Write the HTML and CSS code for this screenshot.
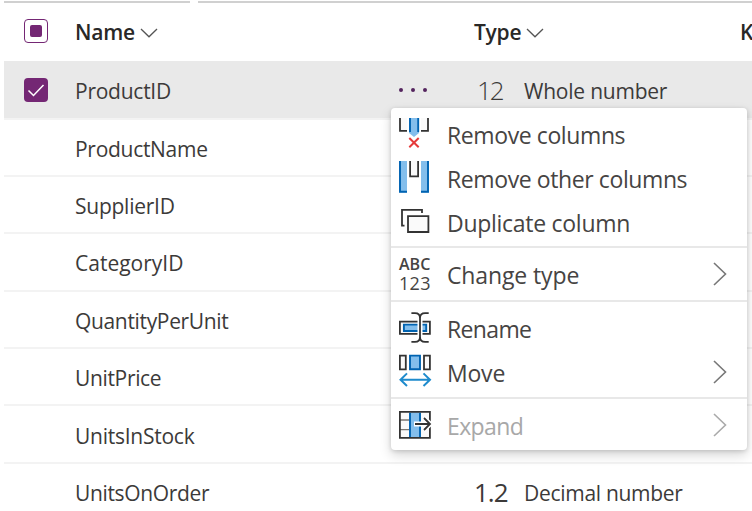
FILE: index.html
```html
<!DOCTYPE html>
<html lang="en">
<head>
<meta charset="utf-8">
<title>Columns</title>
<link rel="stylesheet" href="styles.css">
</head>
<body>
<main class="panel">
  <div class="tabs"><i class="tab tab-first"></i><i class="tab tab-rest"></i></div>
  <div class="row head">
    <span class="check"><i class="box mixed"></i></span>
    <span class="name"><b class="t-name">Name</b><svg class="down" viewBox="0 0 18 10"><path d="M1 1l8 7.8L17 1"/></svg></span>
    <span class="more"></span>
    <span class="kind"><b class="t-type">Type</b><svg class="down" viewBox="0 0 18 10"><path d="M1 1l8 7.8L17 1"/></svg></span>
    <b class="key">K</b>
  </div>
  <div class="row selected">
    <span class="check"><i class="box checked"><svg viewBox="0 0 24 24"><path d="M4.5 12.5l5 5L19.5 7"/></svg></i></span>
    <span class="name"><span class="n1">ProductID</span></span>
    <span class="more"><i></i><i></i><i></i></span>
    <span class="kind"><span class="num light">12</span><span class="whole">Whole number</span></span>
  </div>
  <div class="row"><span class="check"></span><span class="name"><span class="n2">ProductName</span></span></div>
  <div class="row"><span class="check"></span><span class="name"><span class="n3">SupplierID</span></span></div>
  <div class="row"><span class="check"></span><span class="name"><span class="n4">CategoryID</span></span></div>
  <div class="row"><span class="check"></span><span class="name"><span class="n5">QuantityPerUnit</span></span></div>
  <div class="row"><span class="check"></span><span class="name"><span class="n6">UnitPrice</span></span></div>
  <div class="row"><span class="check"></span><span class="name"><span class="n7">UnitsInStock</span></span></div>
  <div class="row last"><span class="check"></span><span class="name"><span class="n8">UnitsOnOrder</span></span><span class="more"></span>
    <span class="kind"><span class="num">1.2</span><span class="decimal">Decimal number</span></span></div>
</main>

<div class="menu">
  <div class="group g1">
    <div class="item">
      <svg class="icon" viewBox="397 114 36 44">
        <path class="wash" d="M400 118h7v13h-7zM421 118h7v13h-7z"/>
        <path class="ink" d="M400 118v12.8h7M428 118v12.8h-7"/>
        <path class="sky" d="M409 118h10v15l-5 4-5-4z"/>
        <path class="blue" d="M410 118v14M418.2 118v14"/>
        <path class="red" d="M409.3 138l9.4 9.2M418.7 138l-9.4 9.2"/>
      </svg><span class="m1">Remove columns</span></div>
    <div class="item">
      <svg class="icon" viewBox="397 157 36 44">
        <path class="sky" d="M399 161h8v31.6h-8zM421 161h8v31.6h-8z"/>
        <path class="blue" d="M400 161v30.8h7M428 161v30.8h-7"/>
        <path class="wash" d="M410 161h8v15h-8z"/>
        <path class="ink" d="M410.1 161v15.3h8V161"/>
      </svg><span class="m2">Remove other columns</span></div>
    <div class="item">
      <svg class="icon" viewBox="397 201 36 44">
        <path class="ink" d="M404.5 225.6h-2.5v-15.8h20V213"/>
        <path class="ink wash" d="M408 216.2h20.4v15.8H408z"/>
      </svg><span class="m3">Duplicate column</span></div>
  </div>
  <div class="group g2">
    <div class="item"><span class="icon abc"><b>ABC</b><span>123</span></span><span class="m4">Change type</span><svg class="right" viewBox="0 0 14 24"><path d="M1 1l11.5 11L1 23"/></svg></div>
  </div>
  <div class="group g3">
    <div class="item">
      <svg class="icon" viewBox="397 308 36 44">
        <path class="ink wash" d="M399.9 321.6h30v12.2h-30z"/>
        <path class="sky blue" d="M403.9 324.6h22.3v6.4h-22.3z"/>
        <path class="halo" d="M420 315v25"/>
        <path class="ink" d="M411.4 313.2h3.6c3 0 5 1.6 5 4.8v19c0 3.2-2 4.9-5 4.9h-3.6M428.7 313.2h-3.6c-3 0-5.1 1.6-5.1 4.8v19c0 3.2 2.1 4.9 5.1 4.9h3.6"/>
      </svg><span class="m5">Rename</span></div>
    <div class="item">
      <svg class="icon" viewBox="397 351.6 36 44">
        <path class="ink wash" d="M399.9 356.2h5.9v13.7h-5.9zM424 356.2h5.9v13.7H424z"/>
        <path class="sky blue" d="M410 356.2h10v13.7h-10z"/>
        <path class="arrow" d="M400.5 380.3H430M407 374l-6.500 6.300 6.500 6.300M423.500 374l6.500 6.300-6.500 6.300"/>
      </svg><span class="m6">Move</span><svg class="right" viewBox="0 0 14 24"><path d="M1 1l11.5 11L1 23"/></svg></div>
  </div>
  <div class="group g4">
    <div class="item disabled">
      <svg class="icon" viewBox="397 405 36 44">
        <path class="wash" d="M400 412h30v26h-30z"/>
        <path class="sky" d="M409 412h12v26h-12z"/>
        <path class="grid" d="M400 420h9M400 429.6h9"/>
        <path class="ink" d="M399.9 411.9h30v26h-30z"/>
        <path class="blue" d="M410 413v24M420 413v24"/>
        <path class="halo" d="M414 424h15.5M424 418l6 6-6 6"/>
        <path class="ink" d="M415 424h14.5M424 418l6 6-6 6"/>
      </svg><span class="m7">Expand</span><svg class="right" viewBox="0 0 14 24"><path d="M1 1l11.5 11L1 23"/></svg></div>
  </div>
</div>
</body>
</html>
```
FILE: styles.css
```css
* { box-sizing: border-box; }
body {
  margin: 0;
  width: 752px;
  height: 511px;
  overflow: hidden;
  background: #fff;
  color: #3c3a39;
  font: 21px/28px "Open Sans", "Noto Sans", sans-serif;
}
svg { display: block; fill: none; flex: none; }
.panel { padding: 1px 0 0 4px; }
.tabs { display: flex; gap: 8px; height: 2px; }
.tab { background: #d0d0d0; }
.tab-first { width: 186px; }
.tab-rest { flex: 1; }
.row {
  display: flex;
  align-items: center;
  height: 57.4px;
  padding-top: 3px;
  border-bottom: 2px solid #f3f3f3;
  white-space: nowrap;
}
.head { height: 57.5px; padding-top: 0; border: 0; }
.head b { font-weight: 600; color: #292827; }
.head .check { margin-top: -2px; }
.selected { background: #e9e9e9; height: 59px; }
.selected .check { margin-top: -1px; }
.last { padding-top: 0; border: 0; }
.check { width: 71px; padding-left: 20px; flex: none; }
.name { width: 323px; display: flex; align-items: center; flex: none; }
.more { width: 76px; padding-left: 1px; display: flex; gap: 8px; flex: none; margin-top: -2px; }
.more i { width: 4px; height: 4px; border-radius: 50%; background: #54245e; }
.kind { width: 266px; display: flex; align-items: center; flex: none; }
.num { width: 50px; font-size: 26px; letter-spacing: -1px; flex: none; margin-top: -2px; }
.light { font-weight: 300; padding-left: 3px; letter-spacing: -2px; }
.down { width: 18px; height: 10px; margin: 2px 0 0 5px; stroke: #555; stroke-width: 1.3; }
.box { display: block; width: 24px; height: 24px; border-radius: 4px; }
.mixed { border: 1.5px solid #742774; padding: 5px; }
.mixed::before { content: ""; display: block; width: 12px; height: 12px; border-radius: 2px; background: #742774; }
.checked { background: #742774; }
.checked path { stroke: #fff; stroke-width: 1.5; }

.t-name, .t-type, .n3 { letter-spacing: -.25px; }
.n1, .n7 { letter-spacing: -.25px; }
.n2, .decimal { letter-spacing: -.29px; }
.n5, .n6, .n8 { letter-spacing: -.34px; }
.whole { letter-spacing: -.22px; }
.m1, .m2 { letter-spacing: -.4px; }
.m3 { letter-spacing: -.28px; }
.m4 { letter-spacing: -.12px; }
.m5 { letter-spacing: -.65px; }
.m6 { letter-spacing: -.2px; }
.m7 { letter-spacing: -.6px; }

.menu {
  position: absolute;
  left: 391px;
  top: 108px;
  width: 356px;
  height: 342px;
  background: #fff;
  border-radius: 4px;
  box-shadow: 0 5px 12px rgba(0,0,0,.17), 0 1px 4px rgba(0,0,0,.14);
  font-size: 23px;
  line-height: 30px;
  color: #464443;
}
.group { border-bottom: 2px solid #e8e8e8; }
.g1 { height: 140px; padding-top: 6px; }
.g2 { height: 54px; padding-top: 5px; }
.g3 { height: 97px; padding-top: 6px; }
.g4 { height: 51px; padding-top: 6px; border: 0; }
.item { display: flex; align-items: center; height: 43.65px; padding: 0 20px 0 6px; white-space: nowrap; }
.item > span:not(.icon) { margin-top: -2px; }
.item > .m2:not(.icon), .item > .m3:not(.icon), .item > .m6:not(.icon) { margin-top: -.5px; }
.g2 .item > .m4:not(.icon) { margin-top: 1px; }
.icon { width: 36px; height: 44px; margin-right: 14px; flex: none; }
.right { width: 14px; height: 24px; margin: -3px 0 0 auto; stroke: #777; stroke-width: 1.6; }
.g2 .right { margin-top: -1px; }
.disabled { color: #a8a8a8; }
.disabled .right { stroke: #aaa; }
.ink { stroke: #333; stroke-width: 1.8; }
.blue { stroke: #0063b1; stroke-width: 1.9; }
.sky { fill: #83beec; }
.wash { fill: #fafafa; }
.red { stroke: #e53b3b; stroke-width: 2; }
.halo { stroke: #fff; stroke-width: 5; }
.grid { stroke: #797774; stroke-width: 1.3; }
.arrow { stroke: #1e8bcd; stroke-width: 2; }
.abc { display: flex; flex-direction: column; padding: 2px 0 0 2px; font-size: 16px; line-height: 19px; }
.abc b { font-weight: 600; }
.abc span { font-size: 18px; line-height: 18px; letter-spacing: .3px; }
```
